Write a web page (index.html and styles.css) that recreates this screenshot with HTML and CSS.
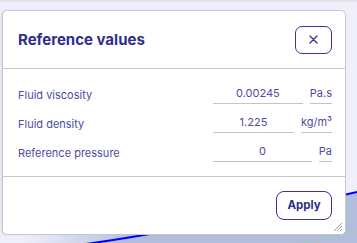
FILE: index.html
```html
<!DOCTYPE html>
<html lang="en">
<head>
    <meta charset="UTF-8">
    <meta name="viewport" content="width=device-width, initial-scale=1.0">
    <title>Reference values</title>
    <link rel="stylesheet" href="styles.css">
</head>
<body>
    <!-- plot canvas behind the dialog -->
    <svg class="backdrop" width="357" height="243" viewBox="0 0 357 243">
        <defs>
            <linearGradient id="fade" x1="0" y1="0" x2="1" y2="0">
                <stop offset="0" stop-color="#f0f0fb"/>
                <stop offset="1" stop-color="#b2bddb"/>
            </linearGradient>
        </defs>
        <rect width="357" height="243" fill="#efeffb"/>
        <rect width="357" height="2" fill="#e2e2e8"/>
        <rect x="20" y="234" width="120" height="9" fill="url(#fade)"/>
        <path d="M86 244 Q200 228 357 192 L357 243 L140 243 Z" fill="#b2bddb"/>
        <path d="M86 244 Q200 228 357 192" fill="none" stroke="#0000ff" stroke-width="2"/>
        <path d="M300 244 L357 231" fill="none" stroke="#9fd29f" stroke-width="0.8"/>
    </svg>

    <div class="dialog">
        <div class="dialog-header">
            <h2 class="dialog-title">Reference values</h2>
            <button class="btn btn-close" aria-label="Close">
                <svg width="9" height="9" viewBox="0 0 9 9">
                    <path d="M1 1 L8 8 M8 1 L1 8" stroke="#33338f" stroke-width="1.3" stroke-linecap="round"/>
                </svg>
            </button>
        </div>
        <div class="dialog-body">
            <div class="field-row">
                <label class="field-label" for="viscosity">Fluid viscosity</label>
                <div class="field-value">
                    <input class="field-input" id="viscosity" type="text" value="0.00245">
                    <span class="field-unit">Pa.s</span>
                </div>
            </div>
            <div class="field-row">
                <label class="field-label" for="density">Fluid density</label>
                <div class="field-value">
                    <input class="field-input" id="density" type="text" value="1.225">
                    <span class="field-unit">kg/m³</span>
                </div>
            </div>
            <div class="field-row">
                <label class="field-label" for="pressure">Reference pressure</label>
                <div class="field-value">
                    <input class="field-input" id="pressure" type="text" value="0">
                    <span class="field-unit">Pa</span>
                </div>
            </div>
        </div>
        <div class="dialog-footer">
            <button class="btn btn-apply">Apply</button>
        </div>
        <svg class="resize-grip" width="10" height="10" viewBox="0 0 10 10">
            <path d="M9 1 L1 9 M9 4 L4 9 M9 7 L7 9" stroke="#9a9aa4" stroke-width="1"/>
        </svg>
    </div>
</body>
</html>
```

FILE: styles.css
```css
body {
    margin: 0;
    padding: 10px 0 0 2px;
    width: 357px;
    height: 243px;
    box-sizing: border-box;
    position: relative;
    overflow: hidden;
    font-family: Inter, "Open Sans", sans-serif;
    background-color: #efeffb;
}
.backdrop {
    position: absolute;
    left: 0;
    top: 0;
}
.dialog {
    position: relative;
    width: 344px;
    height: 225px;
    box-sizing: border-box;
    background-color: #fff;
    border: 1px solid #c6c6cc;
    border-radius: 5px;
    box-shadow: -1px 0 1px rgba(0, 0, 0, 0.08);
}
.dialog-header {
    height: 57px;
    display: flex;
    align-items: center;
    justify-content: space-between;
    padding: 0 13px 0 15px;
    border-bottom: 1px solid #c8c8c8;
}
.dialog-title {
    margin: 0;
    font-size: 15px;
    font-weight: 700;
    color: #2f2f88;
}
.btn {
    background-color: #fff;
    border: 1.5px solid #35359a;
    color: #2f2f88;
    font-family: inherit;
    cursor: pointer;
    padding: 0;
}
.btn-close {
    width: 37px;
    height: 28px;
    border-radius: 7px;
    display: flex;
    align-items: center;
    justify-content: center;
}
.dialog-body {
    height: 108px;
    box-sizing: border-box;
    padding: 14px 13px 0 15px;
    border-bottom: 1px solid #c8c8c8;
}
.field-row {
    display: flex;
    align-items: center;
    height: 21px;
    margin-bottom: 8px;
}
.field-label {
    width: 195px;
    flex-shrink: 0;
    font-size: 11px;
    color: #4c4ca2;
    padding-top: 2px;
}
.field-value {
    flex: 1;
    min-width: 0;
    display: flex;
    gap: 7px;
    height: 21px;
}
.field-input {
    flex: 1;
    min-width: 0;
    width: 0;
    height: 21px;
    box-sizing: border-box;
    border: none;
    border-bottom: 1px solid #c4c4c4;
    padding: 0;
    text-align: center;
    font-family: inherit;
    font-size: 11px;
    color: #4c4ca2;
    outline: none;
}
.field-unit {
    height: 21px;
    box-sizing: border-box;
    line-height: 20px;
    border-bottom: 1px solid #c4c4c4;
    font-size: 11px;
    color: #4c4ca2;
}
.dialog-footer {
    height: 56px;
    display: flex;
    align-items: center;
    justify-content: flex-end;
    padding: 0 13px;
}
.btn-apply {
    width: 56px;
    height: 29px;
    border-radius: 8px;
    font-size: 11.5px;
    font-weight: 700;
}
.resize-grip {
    position: absolute;
    right: 2px;
    bottom: 2px;
}
```
